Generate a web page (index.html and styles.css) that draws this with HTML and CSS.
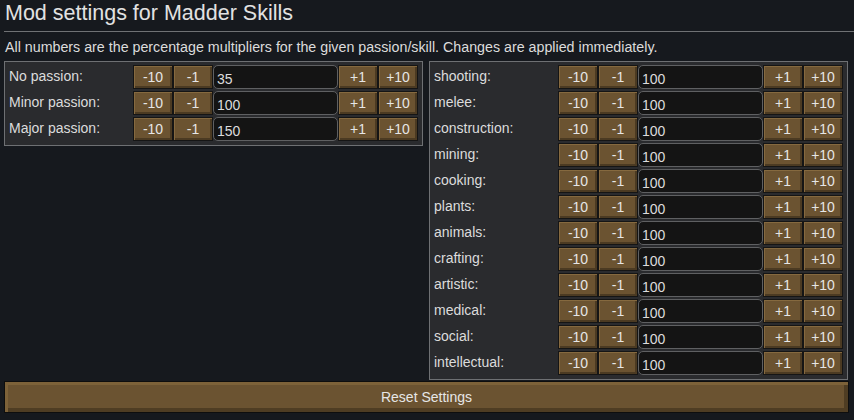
FILE: index.html
```html
<!DOCTYPE html>
<html lang="en">
<head>
    <meta charset="UTF-8">
    <meta name="viewport" content="width=device-width, initial-scale=1.0">
    <title>Mod settings for Madder Skills</title>
    <link rel="stylesheet" href="styles.css">
</head>
<body>
    <h1 class="title">Mod settings for Madder Skills</h1>
    <p class="note">All numbers are the percentage multipliers for the given passion/skill. Changes are applied immediately.</p>

    <div class="columns">
        <!-- Passion multipliers -->
        <div class="panel">
            <div class="row">
                <span class="label">No passion:</span>
                <button class="step">-10</button><button class="step">-1</button>
                <input class="value" type="text" value="35">
                <button class="step">+1</button><button class="step">+10</button>
            </div>
            <div class="row">
                <span class="label">Minor passion:</span>
                <button class="step">-10</button><button class="step">-1</button>
                <input class="value" type="text" value="100">
                <button class="step">+1</button><button class="step">+10</button>
            </div>
            <div class="row">
                <span class="label">Major passion:</span>
                <button class="step">-10</button><button class="step">-1</button>
                <input class="value" type="text" value="150">
                <button class="step">+1</button><button class="step">+10</button>
            </div>
        </div>

        <!-- Skill multipliers -->
        <div class="panel">
            <div class="row">
                <span class="label">shooting:</span>
                <button class="step">-10</button><button class="step">-1</button>
                <input class="value" type="text" value="100">
                <button class="step">+1</button><button class="step">+10</button>
            </div>
            <div class="row">
                <span class="label">melee:</span>
                <button class="step">-10</button><button class="step">-1</button>
                <input class="value" type="text" value="100">
                <button class="step">+1</button><button class="step">+10</button>
            </div>
            <div class="row">
                <span class="label">construction:</span>
                <button class="step">-10</button><button class="step">-1</button>
                <input class="value" type="text" value="100">
                <button class="step">+1</button><button class="step">+10</button>
            </div>
            <div class="row">
                <span class="label">mining:</span>
                <button class="step">-10</button><button class="step">-1</button>
                <input class="value" type="text" value="100">
                <button class="step">+1</button><button class="step">+10</button>
            </div>
            <div class="row">
                <span class="label">cooking:</span>
                <button class="step">-10</button><button class="step">-1</button>
                <input class="value" type="text" value="100">
                <button class="step">+1</button><button class="step">+10</button>
            </div>
            <div class="row">
                <span class="label">plants:</span>
                <button class="step">-10</button><button class="step">-1</button>
                <input class="value" type="text" value="100">
                <button class="step">+1</button><button class="step">+10</button>
            </div>
            <div class="row">
                <span class="label">animals:</span>
                <button class="step">-10</button><button class="step">-1</button>
                <input class="value" type="text" value="100">
                <button class="step">+1</button><button class="step">+10</button>
            </div>
            <div class="row">
                <span class="label">crafting:</span>
                <button class="step">-10</button><button class="step">-1</button>
                <input class="value" type="text" value="100">
                <button class="step">+1</button><button class="step">+10</button>
            </div>
            <div class="row">
                <span class="label">artistic:</span>
                <button class="step">-10</button><button class="step">-1</button>
                <input class="value" type="text" value="100">
                <button class="step">+1</button><button class="step">+10</button>
            </div>
            <div class="row">
                <span class="label">medical:</span>
                <button class="step">-10</button><button class="step">-1</button>
                <input class="value" type="text" value="100">
                <button class="step">+1</button><button class="step">+10</button>
            </div>
            <div class="row">
                <span class="label">social:</span>
                <button class="step">-10</button><button class="step">-1</button>
                <input class="value" type="text" value="100">
                <button class="step">+1</button><button class="step">+10</button>
            </div>
            <div class="row">
                <span class="label">intellectual:</span>
                <button class="step">-10</button><button class="step">-1</button>
                <input class="value" type="text" value="100">
                <button class="step">+1</button><button class="step">+10</button>
            </div>
        </div>
    </div>

    <button class="reset">Reset Settings</button>
</body>
</html>
```

FILE: styles.css
```css
body {
    font-family: 'Liberation Sans', Arial, sans-serif;
    background: #16191e;
    color: #dcdcdc;
    margin: 0;
    padding: 0 0 0 4px;
    font-size: 14px;
}
.title {
    font-size: 21.5px;
    font-weight: normal;
    color: #e2e2e2;
    margin: 0;
    height: 31px;
    line-height: 27px;
    padding-left: 1px;
    border-bottom: 1px solid #6f7174;
}
.note {
    margin: 0;
    height: 29px;
    line-height: 30px;
    padding-left: 1px;
    font-size: 14.25px;
}
.columns {
    display: flex;
    align-items: flex-start;
    gap: 6px;
    width: 844px;
}
.panel {
    width: 419px;
    box-sizing: border-box;
    background: #2a2b2e;
    border: 1px solid #6e7073;
    padding: 3px 4px 4px 3px;
    display: flex;
    flex-direction: column;
    gap: 2px;
}
.row {
    display: flex;
    height: 24px;
}
.label {
    flex: 1;
    line-height: 22px;
    padding-left: 1px;
}
button {
    font-family: inherit;
    cursor: pointer;
}
.step {
    width: 40px;
    height: 24px;
    box-sizing: border-box;
    padding: 0;
    background: #6b5331;
    color: #e6e6e6;
    font-size: 14px;
    border: 1px solid #151515;
    box-shadow: inset 1px 1px 0 #85693f, inset -2px -2px 0 #4b3a22;
}
.value {
    width: 125px;
    height: 24px;
    box-sizing: border-box;
    background: #141414;
    color: #dcdcdc;
    font-family: inherit;
    font-size: 14px;
    border: 1px solid #5f6062;
    border-radius: 5px;
    padding: 3px 0 0 3px;
    outline: none;
}
.reset {
    display: block;
    width: 845px;
    height: 32px;
    margin-top: 1px;
    background: #6b5331;
    color: #e6e6e6;
    font-size: 14px;
    border: 1px solid #0e0e0e;
    box-shadow: inset 3px 3px 0 #7d6239, inset -4px -4px 0 #4f3d23;
}
```
